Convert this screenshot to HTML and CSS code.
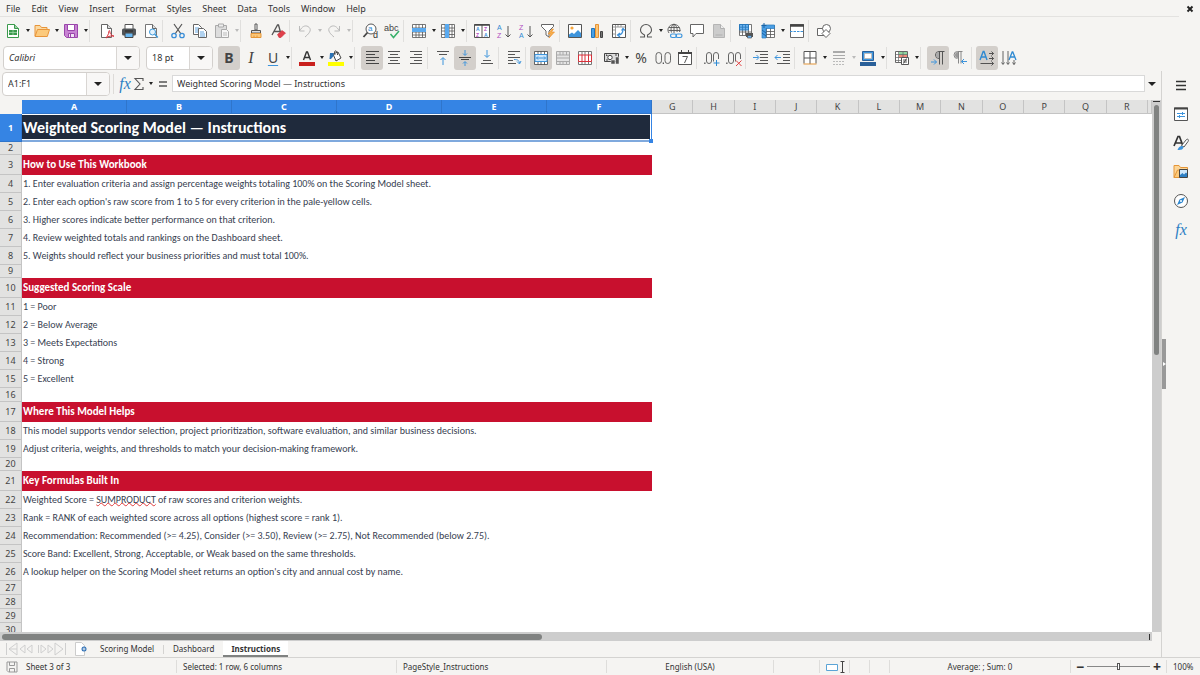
FILE: index.html
```html
<!DOCTYPE html>
<html lang="en">
<head>
<meta charset="utf-8">
<title>Weighted Scoring Model</title>
<link rel="stylesheet" href="styles.css">
</head>
<body>
<div class="app">
<header class="menubar">
  <nav class="menus">
    <button>File</button><button>Edit</button><button>View</button><button>Insert</button><button>Format</button><button>Styles</button><button>Sheet</button><button>Data</button><button>Tools</button><button>Window</button><button>Help</button>
  </nav>
  <button class="close" aria-label="Close document"><svg viewBox="0 0 8 8" width="8" height="8"><path d="M1.500 1.500l5 5M6.500 1.500l-5 5" stroke="#222" stroke-width="1.900"/></svg></button>
</header>

<div class="toolbar" role="toolbar" aria-label="Standard">
  <button class="tb" aria-label="New"><svg viewBox="0 0 16 16"><path d="M2.500 1.500h7l4 4v9h-11z" fill="#fff" stroke="#3a9a4c"/><path d="M9.500 1.500v4h4" fill="#9bd0a4" stroke="#3a9a4c"/><path d="M4 7h8v5H4z" fill="#3a9a4c"/><path d="M4 9.500h8M8 7v5" stroke="#a8dbb0" stroke-width=".7"/></svg></button><button class="drop" aria-label="New options"></button>
  <button class="tb" aria-label="Open"><svg viewBox="0 0 16 16"><path d="M1 13V2.500h5l1.500 2H13V7" fill="#fbd9a0" stroke="#e8953a"/><path d="M1 13.500L3.500 6.500H15.500l-2.200 7z" fill="#fcca7c" stroke="#e8953a"/></svg></button><button class="drop" aria-label="Recent files"></button>
  <button class="tb" aria-label="Save"><svg viewBox="0 0 16 16"><path d="M1.500 1.500h13v13h-11l-2-2z" fill="#c783d2" stroke="#9a45ab"/><path d="M4.500 1.500h7v6h-7z" fill="#fff" stroke="#9a45ab"/><path d="M5.500 10.500h6v4h-6z" fill="#f0e3f3" stroke="#9a45ab"/><path d="M7.500 11v3" stroke="#9a45ab"/></svg></button><button class="drop" aria-label="Save options"></button>
  <span class="sep wide"></span>
  <button class="tb" aria-label="Export as PDF"><svg viewBox="0 0 16 16"><path d="M2.500 1.500h6l4 4v9h-10z" fill="#fff" stroke="#666"/><path d="M8.500 1.500v4h4" fill="#ddd" stroke="#666"/><path d="M7 15c1-1.500 3-4 2.800-6.500 0-1.300 1-1.300 1 0 0 2.500 2 4 4.200 4.700-2-.5-6-.2-8 1.800z" fill="none" stroke="#d9303a"/></svg></button>
  <button class="tb" aria-label="Print"><svg viewBox="0 0 16 16"><path d="M4 6V1.500h8V6" fill="#fff" stroke="#555"/><rect x="1" y="5.500" width="14" height="7" rx="1.500" fill="#505457"/><path d="M4 8h8" stroke="#222"/><path d="M4 10h8v4.500H4z" fill="#6ab7ef" stroke="#444"/></svg></button>
  <button class="tb" aria-label="Print preview"><svg viewBox="0 0 16 16"><path d="M13.500 14.500h-11v-13h7l4 4z" fill="#fff" stroke="#777"/><path d="M9.500 1.500v4h4" fill="#ddd" stroke="#666"/><circle cx="9.500" cy="9" r="3" fill="#e4f2fc" stroke="#3c97d8"/><path d="M11.800 11.300l3 3.200" stroke="#3c97d8" stroke-width="1.500"/></svg></button>
  <span class="sep"></span>
  <button class="tb" aria-label="Cut"><svg viewBox="0 0 16 16"><path d="M4 1l7 10M12 1L5 11" fill="none" stroke="#555" stroke-width="1.200"/><circle cx="4" cy="12.500" r="2.200" fill="none" stroke="#3c8fd8" stroke-width="1.300"/><circle cx="12" cy="12.500" r="2.200" fill="none" stroke="#3c8fd8" stroke-width="1.300"/></svg></button>
  <button class="tb" aria-label="Copy"><svg viewBox="0 0 16 16"><path d="M1.500 1.500h5l3 3v7h-8z" fill="#fff" stroke="#666"/><path d="M3 5h4M3 7h3M3 9h3" stroke="#3c8fd8" stroke-width=".8"/><path d="M6.500 5.500h5l3 3v6h-8z" fill="#fff" stroke="#666"/><path d="M8 9h4M8 11h5M8 13h5" stroke="#3c8fd8" stroke-width=".8"/></svg></button>
  <button class="tb" aria-label="Paste" disabled><svg viewBox="0 0 16 16"><path d="M1.500 2.500h11v12h-11z" fill="#ddd" stroke="#aaa"/><path d="M4.500 1h5v3h-5z" fill="#eee" stroke="#aaa"/><path d="M7.500 6.500h5l2 2v6h-7z" fill="#f6f6f6" stroke="#aaa"/><path d="M9 10h4M9 12h4" stroke="#bbb"/></svg></button><button class="drop" aria-label="Paste options" disabled></button>
  <span class="sep"></span>
  <button class="tb" aria-label="Clone formatting"><svg viewBox="0 0 16 16"><path d="M7 1h2v6H7z" fill="#fff" stroke="#555"/><path d="M3.500 7.500h9v2.500h-9z" fill="#ddd" stroke="#555"/><path d="M3 10.500h10v4H3z" fill="#fbc77a" stroke="#e59638"/><path d="M6 14.500v-2M9 14.500v-2" stroke="#e59638"/></svg></button>
  <button class="tb" aria-label="Clear formatting"><svg viewBox="0 0 16 16"><path d="M2 12L7.500 2h1L11 11M4 8.500h6" fill="none" stroke="#555" stroke-width="1.300"/><path d="M7.500 11.500l4.500-4 3.500 2.500-4.500 4.500h-2z" fill="#e0404a" stroke="#c92f3a" stroke-width=".6"/></svg></button>
  <span class="sep"></span>
  <button class="tb" aria-label="Undo" disabled><svg viewBox="0 0 16 16"><path d="M2.500 3v5h5M3 7.500C5 3.500 8 2 11 3.500c4 2.500 2.500 6-3 10.500" fill="none" stroke="#bbb"/></svg></button><button class="drop" aria-label="Undo history" disabled></button>
  <button class="tb" aria-label="Redo" disabled><svg viewBox="0 0 16 16"><path d="M13.500 3v5h-5M13 7.500C11 3.500 8 2 5 3.500 1 6 2.500 9.500 8 14" fill="none" stroke="#bbb"/></svg></button><button class="drop" aria-label="Redo history" disabled></button>
  <span class="sep wide"></span>
  <button class="tb" aria-label="Find and replace"><svg viewBox="0 0 16 16"><circle cx="9" cy="6" r="5" fill="#fff" stroke="#555"/><path d="M5.500 9.500L1.500 14" stroke="#444" stroke-width="1.800"/><text x="6" y="8" font-size="8" fill="#2f8ad2">a</text><text x="11" y="15" font-size="9" fill="#333">d</text></svg></button>
  <button class="tb" aria-label="Spelling"><svg viewBox="0 0 16 16"><text x="0" y="8" font-size="9" fill="#444">abc</text><path d="M6.500 11l3 3.500L15 8" fill="none" stroke="#37b06a" stroke-width="1.500"/></svg></button>
  <span class="sep"></span>
  <button class="tb" aria-label="Row"><svg viewBox="0 0 16 16"><path d="M1.500 1.500h13v13h-13z" fill="#fff"/><path d="M1.500 1.500h13v13h-13zM1.500 5h13M1.500 9h13M1.500 12h13M5 1.500v13M8 1.500v13M11.500 1.500v13" fill="none" stroke="#555" stroke-width=".8"/><path d="M1 5h14v4H1z" fill="#5aaaf0"/></svg></button><button class="drop" aria-label="Row options"></button>
  <button class="tb" aria-label="Column"><svg viewBox="0 0 16 16"><path d="M1.500 1.500h13v13h-13zM1.500 5h13M1.500 8h13M1.500 11.500h13M5 1.500v13M9 1.500v13M12 1.500v13" fill="#fff" stroke="#555" stroke-width=".8"/><path d="M5 1h4v14H5z" fill="#5aaaf0"/></svg></button><button class="drop" aria-label="Column options"></button>
  <span class="sep"></span>
  <button class="tb" aria-label="Sort"><svg viewBox="0 0 16 16"><path d="M.500 1.500h15v13H.500zM8 2v12" fill="#fff" stroke="#555"/><path d="M.500 2h15" stroke="#444" stroke-width="1.500"/><g font-size="5" font-weight="bold"><text x="2" y="7.500" fill="#3c8fd8">A</text><text x="2" y="13.500" fill="#b04bc0">Z</text><text x="10" y="7.500" fill="#b04bc0">Z</text><text x="10" y="13.500" fill="#3c8fd8">A</text></g></svg></button>
  <button class="tb" aria-label="Sort ascending"><svg viewBox="0 0 16 16"><g font-size="7"><text x="1" y="6.500" fill="#2f8ad2">A</text><text x="1" y="15" fill="#b04bc0">Z</text></g><path d="M12 3v11M9.500 11.500L12 14l2.500-2.500" fill="none" stroke="#555"/></svg></button>
  <button class="tb" aria-label="Sort descending"><svg viewBox="0 0 16 16"><g font-size="7"><text x="1" y="6.500" fill="#b04bc0">Z</text><text x="1" y="15" fill="#2f8ad2">A</text></g><path d="M12 3v11M9.500 11.500L12 14l2.500-2.500" fill="none" stroke="#555"/></svg></button>
  <button class="tb" aria-label="AutoFilter"><svg viewBox="0 0 16 16"><path d="M1.500 1.500h12v2l-4.500 4.500v6l-3-2V8L1.500 3.500z" fill="#fff" stroke="#666"/><path d="M12 6l-4 5h3l-2 4 5.500-6h-3l2-3z" fill="#f7b04c" stroke="#e88c28" stroke-width=".6"/></svg></button>
  <span class="sep"></span>
  <button class="tb" aria-label="Insert image"><svg viewBox="0 0 16 16"><path d="M1.500 1.500h13v13h-13z" fill="#fff" stroke="#555"/><circle cx="5" cy="5" r="1.600" fill="#f6a53c"/><path d="M2 14v-2.500l3-2 2 1.500 4-4 3 3v4z" fill="#3d94dc"/></svg></button>
  <button class="tb" aria-label="Insert chart"><svg viewBox="0 0 16 16"><path d="M2.500 5.500h3v9h-3z" fill="#4aa0e6" stroke="#2176bd"/><path d="M6.500 1.500h3v13h-3z" fill="#fcc677" stroke="#e79335"/><path d="M11.500 8.500h2v6h-2z" fill="#777" stroke="#444"/></svg></button>
  <button class="tb" aria-label="Pivot table"><svg viewBox="0 0 16 16"><path d="M1.500 1.500h13v13h-13z" fill="#fff" stroke="#555"/><path d="M2 4h12M4.500 2v12M7 2v2M10 2v2M2 7h2.500M2 11h2.500" stroke="#999"/><path d="M7 12c4 0 5-3 5-6M10.500 7.500L12 5.500l2 2M9 10l-2.500 2L9 14" fill="none" stroke="#3c8fd8" stroke-width="1.200"/></svg></button>
  <span class="sep"></span>
  <button class="tb" aria-label="Special character"><svg viewBox="0 0 16 16"><path d="M2 14h4.500v-2C3.500 10.500 2.500 9 2.500 7a5.500 5.500 0 0 1 11 0c0 2-1 3.500-4 5v2H14" fill="none" stroke="#555" stroke-width="1.100"/></svg></button><button class="drop" aria-label="Character options"></button>
  <button class="tb" aria-label="Hyperlink"><svg viewBox="0 0 16 16"><path d="M2 10a6 5.500 0 1 1 10.500-1M2 4.500h10.500M1.500 7.500h12M7 1v9M4.500 9.500C3.500 6 4 3 7 1c3 2 3.500 5 3 8" fill="none" stroke="#555" stroke-width=".9"/><rect x="3.500" y="11" width="6" height="3.500" rx="1.700" fill="none" stroke="#3d94dc" stroke-width="1.200"/><rect x="9" y="11" width="6" height="3.500" rx="1.700" fill="none" stroke="#3d94dc" stroke-width="1.200"/></svg></button>
  <button class="tb" aria-label="Comment"><svg viewBox="0 0 16 16"><path d="M1.500 1.500h13v9H7l-3 3.500v-3.500H1.500z" fill="#fff" stroke="#666"/></svg></button>
  <button class="tb" aria-label="Headers and footers" disabled><svg viewBox="0 0 16 16"><path d="M2.500 1.500h7l4 4v9h-11z" fill="#ccc" stroke="#b5b5b5"/><path d="M9.500 1.500v4h4M4.500 12h7" fill="#eee" stroke="#b0b0b0"/></svg></button>
  <span class="sep"></span>
  <button class="tb" aria-label="Print area"><svg viewBox="0 0 16 16"><path d="M1.500 1.500h12v11h-12zM1.500 9h12M4.500 1.500v11M7.500 1.500v11M10.500 1.500v11" fill="#fff" stroke="#555" stroke-width=".8"/><path d="M1.500 1.500h9V7h-9z" fill="#6cb2ee" stroke="#2779bd"/><path d="M1.500 4.200h9M4.500 2v5M7.500 2v5" stroke="#2779bd" stroke-width=".8"/><path d="M8 10h7v4H8z" fill="#555"/><path d="M9.500 12.500h4V15h-4z" fill="#6cb2ee" stroke="#444" stroke-width=".6"/></svg></button>
  <button class="tb" aria-label="Freeze rows and columns"><svg viewBox="0 0 16 16"><path d="M2.500 2.500h12v12h-12zM2.500 8.500h12M2.500 11.500h12M6.500 2.500v12M10.500 2.500v12" fill="#fff" stroke="#555" stroke-width=".8"/><path d="M2 2h12.500v3.500H6V15H2z" fill="#4a9ee4" stroke="#2779bd" stroke-width=".7"/><path d="M4 0v5M1.500 2.500h5" stroke="#1c64a6"/><path d="M2 7l4 3M2 10l4 3" stroke="#1c64a6"/></svg></button><button class="drop" aria-label="Freeze options"></button>
  <button class="tb" aria-label="Split window"><svg viewBox="0 0 16 16"><path d="M1.500 1.500h13v13h-13z" fill="#fff" stroke="#666"/><path d="M1 2.500h14" stroke="#444" stroke-width="2.500"/><path d="M1 8.500h14" stroke="#3d94dc" stroke-dasharray="2.500 1"/></svg></button>
  <span class="sep"></span>
  <button class="tb" aria-label="Show draw functions"><svg viewBox="0 0 16 16"><path d="M1.500 5.500h7v7h-7z" fill="#fff" stroke="#666"/><circle cx="10.500" cy="5.500" r="4" fill="#fff" stroke="#666"/><path d="M10 6.500l4 4-4 4-4-4z" fill="#fff" stroke="#666"/></svg></button>
</div>

<div class="toolbar format" role="toolbar" aria-label="Formatting">
  <div class="combo font"><input type="text" value="Calibri" aria-label="Font name"><button class="arrow" aria-label="Font list"></button></div>
  <div class="combo size"><input type="text" value="18 pt" aria-label="Font size"><button class="arrow" aria-label="Size list"></button></div>
  <button class="tb on glyph bold" aria-pressed="true">B</button>
  <button class="tb glyph italic">I</button>
  <button class="tb glyph under">U</button><button class="drop" aria-label="Underline options"></button>
  <span class="sep"></span>
  <button class="tb" aria-label="Font color"><svg viewBox="0 0 16 16"><path d="M4.500 10L7.500 2h1l3 8M5.500 7.500h5" fill="none" stroke="#333" stroke-width="1.400"/><path d="M0 12h16v4H0z" fill="#c9211e"/></svg></button><button class="drop" aria-label="Font colors"></button>
  <button class="tb" aria-label="Highlighting"><svg viewBox="0 0 16 16"><path d="M0 12h16v4H0z" fill="#ff0"/><path d="M5 4l5-2 3 6-5 3z" fill="#fff" stroke="#444"/><path d="M7 5c-2-6 3-5 2.500 0" fill="none" stroke="#444"/><path d="M2 3h3.500v3L3 9H1.500z" fill="#2a72b5"/></svg></button><button class="drop" aria-label="Highlight colors"></button>
  <span class="sep wide"></span>
  <button class="tb on" aria-label="Align left"><svg viewBox="0 0 16 16"><path d="M2 1.500h13M2 4.500h9M2 7.500h13M2 10.500h9M2 13.500h13" stroke="#444"/></svg></button>
  <button class="tb" aria-label="Align center"><svg viewBox="0 0 16 16"><path d="M2 1.500h12M4 4.500h8M2 7.500h12M4 10.500h8M2 13.500h12" stroke="#555"/></svg></button>
  <button class="tb" aria-label="Align right"><svg viewBox="0 0 16 16"><path d="M2 1.500h12M6 4.500h8M2 7.500h12M6 10.500h8M2 13.500h12" stroke="#555"/></svg></button>
  <span class="sep"></span>
  <button class="tb" aria-label="Align top"><svg viewBox="0 0 16 16"><path d="M2 1.500h12M4 4.500h8" stroke="#555"/><path d="M8 15V8M5.500 10L8 7.500l2.500 2.500" fill="none" stroke="#3d94dc"/></svg></button>
  <button class="tb on" aria-label="Center vertically"><svg viewBox="0 0 16 16"><path d="M2 7.500h12M4 9.500h8" stroke="#444"/><path d="M8 0v5M6 3.500l2 2 2-2M8 16v-4M6 13.500l2-2 2 2" fill="none" stroke="#3d94dc"/></svg></button>
  <button class="tb" aria-label="Align bottom"><svg viewBox="0 0 16 16"><path d="M4 10.500h8M2 13.500h12" stroke="#555"/><path d="M8 0v7M5.500 5L8 7.500 10.500 5" fill="none" stroke="#3d94dc"/></svg></button>
  <span class="sep"></span>
  <button class="tb" aria-label="Wrap text"><svg viewBox="0 0 16 16"><path d="M2 1.500h12M2 4.500h7M2 7.500h12M2 10.500h5M2 13.500h8" stroke="#555"/><path d="M8 9.500c4 0 5 1 5.500 3.500M11 11.500l2.500 2.500 1.500-3" fill="none" stroke="#3d94dc"/></svg></button>
  <span class="sep"></span>
  <button class="tb on" aria-label="Merge and center"><svg viewBox="0 0 16 16"><path d="M1.500 1.500h13v13h-13zM5 1.500v13M8 1.500v13M11.500 1.500v13" fill="#fff" stroke="#444" stroke-width=".8"/><path d="M2 4.500h12v7H2z" fill="#cfe7fb" stroke="#3d94dc"/><path d="M3.500 8h9M5 6.500L3.500 8 5 9.500M11 6.500L12.500 8 11 9.500" fill="none" stroke="#3d94dc"/></svg></button>
  <button class="tb" aria-label="Unmerge cells" disabled><svg viewBox="0 0 16 16"><path d="M1.500 1.500h13v13h-13zM1.500 5h13M1.500 8h13M1.500 11.500h13M5 1.500V5M8 1.500V5M11.500 1.500V5M5 11.500v3M8 11.500v3M11.500 11.500v3" fill="#e4e4e4" stroke="#aaa"/></svg></button>
  <button class="tb" aria-label="Split cells"><svg viewBox="0 0 16 16"><path d="M1.500 1.500h13v13h-13zM5 1.500v13M8 1.500v13M11.500 1.500v13" fill="#fff" stroke="#777"/><path d="M1.500 5h13v6.500h-13zM5 5v6.500M8 5v6.500M11.500 5v6.500" fill="#fff" stroke="#d9303a"/></svg></button>
  <span class="sep"></span>
  <button class="tb" aria-label="Currency"><svg viewBox="0 0 16 16"><path d="M.500 3.500h14v8H.500z" fill="#ddd" stroke="#444"/><circle cx="6" cy="7.500" r="2.200" fill="#fff" stroke="#444"/><path d="M2 5h1v1M13 5h-2M2 10h2" stroke="#444"/><path d="M7 10h4v4H7zM11.500 7h3.500v7h-3.500z" fill="#555" stroke="#eee" stroke-width=".5"/></svg></button><button class="drop" aria-label="Currency options"></button>
  <button class="tb glyph num" aria-label="Percent">%</button>
  <button class="tb" aria-label="Number format"><svg viewBox="0 0 16 16"><g fill="none" stroke="#666"><rect x="1" y="2.500" width="5.500" height="11" rx="2.750"/><rect x="10" y="2.500" width="5.500" height="11" rx="2.750"/></g><path d="M7.700 12.500h1.300V14H7.700z" fill="#555"/></svg></button>
  <button class="tb" aria-label="Date"><svg viewBox="0 0 16 16"><path d="M1.500 2.500h13v12h-13z" fill="#fff" stroke="#555"/><path d="M1 3h14" stroke="#444" stroke-width="2"/><path d="M4.500 0v3M11.500 0v3" stroke="#444"/><path d="M5.500 6.500h5l-3 6.500" fill="none" stroke="#555"/></svg></button>
  <span class="sep"></span>
  <button class="tb" aria-label="Add decimal place"><svg viewBox="0 0 16 16"><g fill="none" stroke="#666"><rect x="2.500" y="2.500" width="5" height="11" rx="2.500"/><path d="M9.500 11.500V5a2.500 2.500 0 0 1 5 0v4"/></g><path d="M.200 12.500h1.300V14H.200z" fill="#555"/><path d="M12.500 10v6M9.500 13h6" stroke="#2f8ad2"/></svg></button>
  <button class="tb" aria-label="Delete decimal place"><svg viewBox="0 0 16 16"><g fill="none" stroke="#666"><rect x="2.500" y="2.500" width="5" height="11" rx="2.500"/><path d="M9.500 11.500V5a2.500 2.500 0 0 1 5 0v4"/></g><path d="M.200 12.500h1.300V14H.200z" fill="#555"/><path d="M10 10.500l5.500 5.500M15.500 10.500L10 16" stroke="#e04343"/></svg></button>
  <span class="sep"></span>
  <button class="tb" aria-label="Increase indent"><svg viewBox="0 0 16 16"><path d="M2 1.500h13M7 4.500h8M7 7.500h8M7 10.500h8M2 13.500h13" stroke="#555"/><path d="M0 7.500h5.500M3.500 5l2.500 2.500L3.500 10" fill="none" stroke="#3d94dc"/></svg></button>
  <button class="tb" aria-label="Decrease indent"><svg viewBox="0 0 16 16"><path d="M2 1.500h13M8 4.500h7M8 7.500h7M8 10.500h7M2 13.500h13" stroke="#555"/><path d="M0 7.500h6M2.500 5L0 7.500 2.500 10" fill="none" stroke="#3d94dc"/></svg></button>
  <span class="sep"></span>
  <button class="tb" aria-label="Borders"><svg viewBox="0 0 16 16"><path d="M2 13.500v-12h12v12M8 2v12M2 8h12" fill="#fff" stroke="#555"/><path d="M1.500 14h13" stroke="#e59638"/></svg></button><button class="drop" aria-label="Border options"></button>
  <button class="tb" aria-label="Border style" disabled><svg viewBox="0 0 16 16"><path d="M2 2h12" stroke="#aaa" stroke-width="2"/><path d="M2 5.500h12M2 8.500h12" stroke="#aaa"/><path d="M2 11.500h12M2 14.500h12" stroke="#bbb" stroke-dasharray="2 1"/></svg></button><button class="drop" aria-label="Border styles" disabled></button>
  <button class="tb" aria-label="Border color"><svg viewBox="0 0 16 16"><path d="M2.500 1.500h11v9h-11z" fill="#3d94dc" stroke="#2a6099"/><path d="M4.500 3.500h7v5h-7z" fill="#fff" stroke="#bbb"/><path d="M0 12h16v4H0z" fill="#2a6099"/></svg></button><button class="drop" aria-label="Border colors"></button>
  <span class="sep"></span>
  <button class="tb" aria-label="Conditional formatting"><svg viewBox="0 0 16 16"><path d="M1.500 1.500h12v11h-12z" fill="#fff" stroke="#666"/><path d="M5 2h8v3H5z" fill="#8fd6a0"/><path d="M5 5h8v3H5z" fill="#f08a7c"/><path d="M1.500 4.500h12M1.500 7.500h12M1.500 10.500h12M4.500 1.500v11M9 1.500v11" stroke="#666" stroke-width=".7"/><path d="M7.500 7.500h7v7h-7z" fill="#fff" stroke="#555"/><path d="M9 10h4M9 12h4M12.500 8.500l-3 5" stroke="#333" stroke-width=".8"/></svg></button><button class="drop" aria-label="Conditional options"></button>
  <span class="sep wide"></span>
  <button class="tb on" aria-label="Left to right"><svg viewBox="0 0 16 16"><path d="M14.500 1.500H9a3.500 3.500 0 0 0 0 7M9.500 1.500v13M12.500 1.500v13" fill="none" stroke="#555"/><path d="M9 2a3 3 0 0 0 0 6z" fill="#aaa"/><path d="M1 12h5.500M4 9.500L6.500 12 4 14.500" fill="none" stroke="#3d94dc"/></svg></button>
  <button class="tb" aria-label="Right to left"><svg viewBox="0 0 16 16"><path d="M10.500 1.500H5.500a3.500 3.500 0 0 0 0 7M6.500 1.500v12M9 1.500v12" fill="none" stroke="#888"/><path d="M6 2a3 3 0 0 0 0 6z" fill="#999"/><path d="M15 11.500H9.500M12 9l-2.500 2.500L12 14" fill="none" stroke="#3d94dc"/></svg></button>
  <span class="sep"></span>
  <button class="tb on" aria-label="Text direction left to right"><svg viewBox="0 0 16 16"><path d="M1 10L4.200 1.500h.8L8 10M2 7h5" fill="none" stroke="#2f8ad2" stroke-width="1.400"/><path d="M10 3.500h4.500M10 8.500h4.500M1.500 13.500h13M12.500 1.500l2 2-2 2M12.500 6.500l2 2-2 2M12.500 11.500l2 2-2 2" fill="none" stroke="#444" stroke-width=".9"/></svg></button>
  <button class="tb" aria-label="Text direction top to bottom"><svg viewBox="0 0 16 16"><path d="M8 10l3.200-8h.6L15 10M9 7h5" fill="none" stroke="#2f8ad2" stroke-width="1.300"/><path d="M2 1v13M7 1v13M13 10v4.500M.500 12.500l1.500 2 1.500-2M5.500 12.500l1.500 2 1.500-2M11.500 12.500l1.500 2 1.500-2" fill="none" stroke="#555" stroke-width=".9"/></svg></button>
</div>

<main class="work">
  <section class="doc">
    <div class="formula">
      <div class="combo name"><input type="text" value="A1:F1" aria-label="Name box"><button class="arrow" aria-label="Named ranges"></button></div>
      <span class="rule"></span>
      <button class="wizard" aria-label="Function wizard"><i class="fx">fx</i></button>
      <button class="sigma" aria-label="Select function"><svg viewBox="0 0 10 14" width="10" height="14"><path d="M9 4V1.500H1L6 7l-5 5.500h8V10" fill="none" stroke="#555" stroke-width="1.100"/></svg></button><button class="drop" aria-label="Functions"></button>
      <button class="equals" aria-label="Formula"><svg viewBox="0 0 10 8" width="10" height="8"><path d="M1 2h8M1 6h8" stroke="#555" stroke-width="1.600"/></svg></button>
      <input class="entry" type="text" value="Weighted Scoring Model — Instructions" aria-label="Input line">
      <button class="arrow expand" aria-label="Expand formula bar"></button>
    </div>
    <div class="view">
      <div class="sheet">
        <table class="grid">
          <colgroup><col class="c-row"><col span="6" class="c-wide"><col span="12"><col class="c-stub"></colgroup>
          <thead><tr><td class="corner"></td><th class="sel">A</th><th class="sel">B</th><th class="sel">C</th><th class="sel">D</th><th class="sel">E</th><th class="sel">F</th><th>G</th><th>H</th><th>I</th><th>J</th><th>K</th><th>L</th><th>M</th><th>N</th><th>O</th><th>P</th><th>Q</th><th>R</th><th></th></tr></thead>
          <tbody>
            <tr class="title"><th class="sel">1</th><td colspan="6"><div class="selection">Weighted Scoring Model — Instructions<span class="handle"></span></div></td></tr>
            <tr class="gap"><th>2</th></tr>
            <tr class="head"><th>3</th><td colspan="6">How to Use This Workbook</td></tr>
            <tr class="line"><th>4</th><td colspan="6">1. Enter evaluation criteria and assign percentage weights totaling 100% on the Scoring Model sheet.</td></tr>
            <tr class="line"><th>5</th><td colspan="6">2. Enter each option's raw score from 1 to 5 for every criterion in the pale-yellow cells.</td></tr>
            <tr class="line"><th>6</th><td colspan="6">3. Higher scores indicate better performance on that criterion.</td></tr>
            <tr class="line"><th>7</th><td colspan="6">4. Review weighted totals and rankings on the Dashboard sheet.</td></tr>
            <tr class="line"><th>8</th><td colspan="6">5. Weights should reflect your business priorities and must total 100%.</td></tr>
            <tr class="gap"><th>9</th></tr>
            <tr class="head"><th>10</th><td colspan="6">Suggested Scoring Scale</td></tr>
            <tr class="line"><th>11</th><td colspan="6">1 = Poor</td></tr>
            <tr class="line"><th>12</th><td colspan="6">2 = Below Average</td></tr>
            <tr class="line"><th>13</th><td colspan="6">3 = Meets Expectations</td></tr>
            <tr class="line"><th>14</th><td colspan="6">4 = Strong</td></tr>
            <tr class="line"><th>15</th><td colspan="6">5 = Excellent</td></tr>
            <tr class="blank"><th>16</th></tr>
            <tr class="head"><th>17</th><td colspan="6">Where This Model Helps</td></tr>
            <tr class="line"><th>18</th><td colspan="6">This model supports vendor selection, project prioritization, software evaluation, and similar business decisions.</td></tr>
            <tr class="line"><th>19</th><td colspan="6">Adjust criteria, weights, and thresholds to match your decision-making framework.</td></tr>
            <tr class="gap"><th>20</th></tr>
            <tr class="head"><th>21</th><td colspan="6">Key Formulas Built In</td></tr>
            <tr class="line"><th>22</th><td colspan="6">Weighted Score = <span class="misspelt">SUMPRODUCT</span> of raw scores and criterion weights.</td></tr>
            <tr class="line"><th>23</th><td colspan="6">Rank = RANK of each weighted score across all options (highest score = rank 1).</td></tr>
            <tr class="line"><th>24</th><td colspan="6">Recommendation: Recommended (&gt;= 4.25), Consider (&gt;= 3.50), Review (&gt;= 2.75), Not Recommended (below 2.75).</td></tr>
            <tr class="line"><th>25</th><td colspan="6">Score Band: Excellent, Strong, Acceptable, or Weak based on the same thresholds.</td></tr>
            <tr class="line"><th>26</th><td colspan="6">A lookup helper on the Scoring Model sheet returns an option's city and annual cost by name.</td></tr>
            <tr class="blank"><th>27</th></tr>
            <tr class="blank"><th>28</th></tr>
            <tr class="blank"><th>29</th></tr>
            <tr class="blank"><th>30</th></tr>
          </tbody>
        </table>
      </div>
      <div class="vscroll"><span class="stop"></span><span class="thumb"></span></div>
    </div>
    <div class="hscroll"><div class="track"><span class="thumb"></span><span class="stop"></span></div></div>
    <div class="tabs">
      <svg class="tabnav" viewBox="0 0 62 14" width="62" height="14" fill="none" stroke="#cfcfcf"><path d="M1.500 1v12M12 1L4 7l8 6zM4 7h8M20 3l-5 4 5 4zM27 3l-5 4 5 4zM33.500 3v8M36 3l5 4-5 4zM43 3l5 4-5 4zM50 1l8 6-8 6zM60.500 1v12"/></svg>
      <button class="add" aria-label="Add sheet"><svg viewBox="0 0 14 14" width="14" height="14"><path d="M1.500.500h6l3 3v10h-9z" fill="#fff" stroke="#ccc"/><circle cx="10" cy="7" r="2.500" fill="#2f70b5"/><path d="M8.500 7h3M10 5.500v3" stroke="#fff" stroke-width=".8"/></svg></button>
      <button class="tab">Scoring Model</button><span class="tabsep"></span><button class="tab">Dashboard</button><button class="tab current">Instructions</button>
    </div>
  </section>
  <aside class="sidebar">
    <button class="grip" aria-label="Hide sidebar"></button>
    <button aria-label="Sidebar settings"><svg viewBox="0 0 16 16"><path d="M3 4.500h10M3 8.500h10M3 12.500h10" stroke="#333" stroke-width="1.300"/></svg></button>
    <button aria-label="Properties"><svg viewBox="0 0 16 16"><path d="M1.500 2h13v12.500h-13z" fill="#fff" stroke="#555"/><path d="M1 2.500h14" stroke="#444" stroke-width="2"/><path d="M4 7.500h8M4 10.500h8M9.500 6v3M6.500 9v3" stroke="#3d94dc"/></svg></button>
    <button aria-label="Styles"><svg viewBox="0 0 16 16"><path d="M1 11L5 1.500h1.500L10 11M2.500 8h6" fill="none" stroke="#333" stroke-width="1.700"/><path d="M8.500 10.500l5-6c1.500-1 2.500.500 1.500 2L11 12z" fill="#fff" stroke="#555"/><path d="M4.500 15c1-3 3-4.500 5-4l1 1.500c-1 2.500-3.500 2.500-6 2.500z" fill="#3d94dc"/></svg></button>
    <button aria-label="Gallery"><svg viewBox="0 0 16 16"><path d="M1 13.500v-12h5l1.500 2h7V8" fill="#fcd596" stroke="#e59638"/><path d="M1 13.500L4.500 6h4v7.500z" fill="#fcca7c" stroke="#e59638"/><path d="M6.500 5.500h8v8h-8z" fill="#cfe7fb" stroke="#444"/><path d="M7 13v-2l2.500-2 1.500 1.500L13 8.500l1 1V13z" fill="#2d7fc4"/></svg></button>
    <button aria-label="Navigator"><svg viewBox="0 0 16 16"><circle cx="8" cy="8" r="6.500" fill="#fff" stroke="#555"/><path d="M12 4L9.500 9.500 4 12l2.500-5.500z" fill="#2d86cf"/><circle cx="8" cy="8" r="1" fill="#fff"/></svg></button>
    <button aria-label="Functions"><i class="fx">fx</i></button>
  </aside>
</main>

<footer class="status">
  <div><svg viewBox="0 0 12 12" width="12" height="12"><path d="M1 1h10v10H2.500L1 9.500zM3.500 1v3.500h5V1M3.500 11V7.500h5V11" fill="none" stroke="#999"/></svg></div>
  <div>Sheet 3 of 3</div><div>Selected: 1 row, 6 columns</div><div>PageStyle_Instructions</div><div class="mid">English (USA)</div><div></div>
  <div><svg viewBox="0 0 20 12" width="20" height="12"><path d="M.500 3.500h11v6H.500z" fill="#fff" stroke="#5ba4d6"/><path d="M14.500 .500h4M16.500 .500v11M14.500 11.500h4" stroke="#444"/></svg></div><div></div><div></div>
  <div class="mid">Average: ; Sum: 0</div>
  <div class="zoom"><button aria-label="Zoom out">−</button><input type="range" min="0" max="100" value="50" aria-label="Zoom"><button aria-label="Zoom in">+</button></div>
  <div>100%</div>
</footer>
</div>
</body>
</html>
```
FILE: styles.css
```css
* { box-sizing: border-box; }

body {
  margin: 0;
  background: #f5f4f2;
  color: #333;
  font-family: "Noto Sans", sans-serif;
  font-size: 9px;
}

button {
  margin: 0;
  padding: 0;
  border: 0;
  background: none;
  color: inherit;
  font: inherit;
}

input { font: inherit; color: inherit; }
svg { display: block; flex: none; overflow: visible; }
svg text { font-family: "Liberation Sans", sans-serif; }

.app {
  display: flex;
  flex-direction: column;
  height: 100vh;
  overflow: hidden;
}

/* Menu bar */
.menubar {
  display: flex;
  justify-content: space-between;
  flex: none;
  height: 17px;
}
.menus {
  display: flex;
  flex: 1;
  gap: 11px;
  padding-left: 6px;
  border-bottom: 1px solid #e3e2e0;
}
.close {
  display: grid;
  place-items: center;
  width: 21px;
}

/* Toolbars */
.toolbar {
  display: flex;
  align-items: center;
  flex: none;
  height: 27px;
  padding-left: 2px;
}
.toolbar.format { padding-left: 3px; }
.tb {
  display: grid;
  place-items: center;
  flex: none;
  width: 22px;
  height: 24px;
  border-radius: 3px;
}
.tb svg { width: 16px; height: 16px; }
.on { background: #d3cfcb; }
.drop {
  display: grid;
  place-items: center;
  flex: none;
  width: 7px;
  height: 24px;
}
.drop::after {
  content: "";
  border: 2px solid transparent;
  border-top: 3px solid #222;
  border-bottom: 0;
}
.drop:disabled::after { border-top-color: #bbb; }
.sep {
  flex: none;
  width: 5px;
  height: 22px;
  border-left: 1px solid #e0dfdd;
}
.sep.wide { width: 7px; }

.glyph { font-size: 16px; line-height: 22px; color: #444; }
.bold { font-weight: 700; font-size: 14px; }
.italic { font-family: "Liberation Serif", serif; font-style: italic; }
.under { font-size: 14px; text-decoration: underline #3d94dc; text-underline-offset: 2px; }
.num { font-size: 14px; }

.combo {
  display: flex;
  flex: none;
  height: 24px;
  border: 1px solid #d3d0cd;
  border-radius: 4px;
  background: #fff;
  overflow: hidden;
}
.combo input {
  flex: 1;
  min-width: 0;
  padding: 0 5px;
  border: 0;
  outline: 0;
  background: none;
  font-size: 9px;
}
.arrow {
  display: grid;
  place-items: center;
  flex: none;
  width: 23px;
  border-left: 1px solid #d9d6d3;
  background: #f8f7f6;
}
.arrow::after {
  content: "";
  border: 4px solid transparent;
  border-top-color: #222;
  border-bottom: 0;
}
.font { width: 137px; margin-right: 6px; }
.font input { font-style: italic; }
.size { width: 67px; margin-right: 5px; }

/* Work area */
.work { display: flex; flex: 1; min-height: 0; }
.doc {
  display: flex;
  flex-direction: column;
  flex: 1;
  min-width: 0;
}
.formula {
  display: flex;
  align-items: center;
  flex: none;
  height: 29px;
  padding: 0 2px 4px;
}
.name { width: 108px; }
.rule {
  width: 1px;
  height: 20px;
  margin: 0 2px 0 3px;
  background: #dddbd8;
}
.wizard { width: 18px; }
.fx {
  font: italic 16px/16px "Liberation Serif", serif;
  color: #2d7fc4;
}
.sigma { margin-right: 3px; }
.equals { margin: 0 4px; }
.entry {
  flex: 1;
  min-width: 0;
  height: 17px;
  padding: 0 4px;
  border: 1px solid #d9d9d9;
  outline: 0;
  background: #fff;
}
.expand {
  width: 14px;
  border: 0;
  background: none;
}

.view { display: flex; flex: 1; min-height: 0; }
.sheet {
  flex: 1;
  min-width: 0;
  overflow: hidden;
  background: #fff;
}
.grid {
  width: 100%;
  table-layout: fixed;
  border-collapse: separate;
  border-spacing: 0;
}
.c-row { width: 22px; }
.c-wide { width: 105px; }
.c-stub { width: 4px; }
.grid th {
  padding: 0;
  border-right: 1px solid #c4c4c4;
  border-bottom: 1px solid #c4c4c4;
  background: #e2e2e1;
  color: #444;
  font-size: 9px;
  font-weight: 400;
  line-height: 12px;
}
.grid thead th { height: 14px; line-height: 13px; }
.grid th.sel {
  border-color: #2f75cb;
  background: #3584e4;
  color: #fff;
  font-weight: 700;
}
.grid .corner { padding: 0; background: #f5f4f2; }
.grid tbody td {
  padding: 0 0 0 1px;
  color: #374151;
  font-family: Carlito, Lato, sans-serif;
  font-size: 10px;
  line-height: 18px;
  white-space: nowrap;
  vertical-align: top;
}
.title { height: 28px; }
.gap { height: 13px; }
.blank { height: 14px; }
.line { height: 18px; }
.head { height: 20px; }
.grid .head td {
  background: #c8102e;
  color: #fff;
  font-size: 11px;
  font-weight: 700;
  line-height: 20px;
}
.grid .title td { padding: 0; }
.selection {
  position: relative;
  height: 28px;
  padding-left: 1px;
  border-right: 1px solid #3584e4;
  border-bottom: 2px solid #7fa9dd;
  box-shadow: inset -1px -1px #fff, inset 0 1px #fff;
  background: #1f2a3c;
  color: #fff;
  font-size: 16px;
  font-weight: 700;
  line-height: 27px;
}
.handle {
  position: absolute;
  right: -2px;
  bottom: -3px;
  width: 4px;
  height: 4px;
  background: #3584e4;
}
.misspelt {
  text-decoration: underline wavy #e03b3b 1px;
  text-decoration-skip-ink: none;
  text-underline-offset: -1px;
}

.vscroll {
  display: flex;
  flex-direction: column;
  align-items: center;
  flex: none;
  width: 9px;
  background: #cdcdcd;
}
.vscroll .stop { width: 7px; height: 1px; margin: 1px 0 3px; background: #333; }
.vscroll .thumb { width: 5px; height: 47%; border-radius: 3px; background: #808281; }
.hscroll { flex: none; padding-right: 9px; }
.track {
  display: flex;
  align-items: center;
  justify-content: space-between;
  height: 9px;
  padding: 0 2px;
  background: #cdcdcd;
}
.track .thumb { width: 47%; height: 6px; border-radius: 3px; background: #808281; }
.track .stop { width: 1px; height: 6px; background: #333; }

.tabs {
  display: flex;
  align-items: stretch;
  flex: none;
  height: 16px;
  padding-left: 5px;
  font-size: 8px;
}
.tabnav { margin-top: 1px; }
.add { margin: 0 3px 0 7px; }
.tab {
  display: flex;
  align-items: center;
  padding: 0 9px;
  border-bottom: 2px solid transparent;
}
.tabsep {
  align-self: center;
  width: 1px;
  height: 9px;
  background: #d4d3d1;
}
.tab.current {
  padding: 0 8px;
  border-bottom-color: #808281;
  background: #fff;
  font-weight: 700;
}

/* Sidebar */
.sidebar {
  position: relative;
  display: flex;
  flex-direction: column;
  align-items: center;
  flex: none;
  width: 39px;
  padding-top: 6px;
  gap: 13px;
  border-left: 1px solid #d4d3d1;
}
.sidebar button:not(.grip) {
  display: grid;
  place-items: center;
  width: 16px;
  height: 16px;
}
.sidebar svg { width: 16px; height: 16px; }
.grip {
  position: absolute;
  left: 0;
  top: 268px;
  display: grid;
  place-items: center;
  width: 4px;
  height: 50px;
  background: #999;
}
.grip::after {
  content: "";
  border: 2px solid transparent;
  border-left: 3px solid #fff;
  border-right: 0;
}

/* Status bar */
.status {
  display: grid;
  grid-template-columns: 20px 157px 220px 210px 167px 46px 30px 20px 20px 1fr 96px 33px;
  align-items: center;
  flex: none;
  height: 18px;
  border-top: 1px solid #d4d3d1;
  font-size: 8px;
}
.status > div {
  display: flex;
  align-items: center;
  height: 13px;
  padding-left: 6px;
  border-right: 1px solid #dedddb;
  white-space: nowrap;
}
.status > div:first-child, .status > div:last-child { border-right: 0; }
.status > .mid { justify-content: center; padding: 0; }
.status > .zoom { padding: 0 4px; gap: 2px; }
.zoom button { width: 10px; font-size: 14px; font-weight: 700; line-height: 13px; }
.zoom input {
  flex: 1;
  min-width: 0;
  height: 9px;
  margin: 0;
  background: none;
  appearance: none;
}
.zoom input::-webkit-slider-runnable-track {
  height: 1px;
  background: #888;
}
.zoom input::-webkit-slider-thumb {
  width: 3px;
  height: 7px;
  margin-top: -3px;
  border: 1px solid #555;
  background: #fff;
  appearance: none;
}
```
